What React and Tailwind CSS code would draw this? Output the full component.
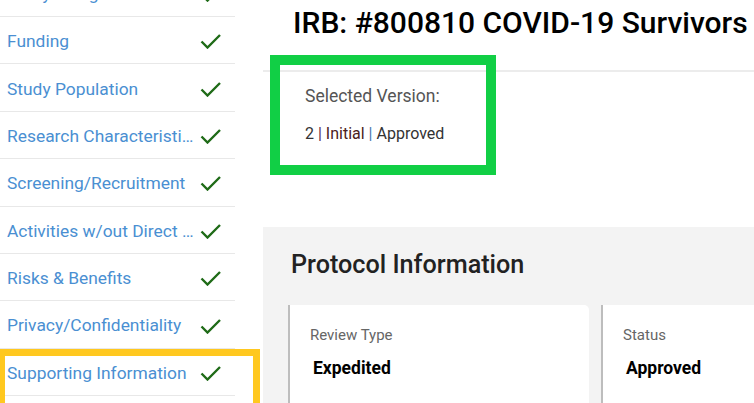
import React from 'react'

const steps = [
  'Study Design',
  'Funding',
  'Study Population',
  'Research Characteristics',
  'Screening/Recruitment',
  'Activities w/out Direct Contact',
  'Risks & Benefits',
  'Privacy/Confidentiality',
  'Supporting Information',
]

const Check = () => (
  <svg width="21" height="16" viewBox="0 0 21 16" fill="none" className="shrink-0">
    <path d="M1.5 8.5 L7.5 14.5 L20 2" stroke="#1f6b17" strokeWidth="2.4" />
  </svg>
)

const StepRow = ({ label }) => (
  <div className="h-[47.4px] flex items-center border-b border-[#e8e8e8] pl-[7px] pr-[14px] pt-[2px]">
    <span className="flex-1 min-w-0 truncate pr-[5px] text-[17.4px] text-[#4a8fd2]">{label}</span>
    <Check />
  </div>
)

const InfoCard = ({ label, value }) => (
  <div className="w-[301px] shrink-0 bg-white border-l-2 border-[#bdbdbd] rounded-tr-[5px] pt-[20px] pl-[20px] h-[120px]">
    <div className="text-[15px] leading-[20px] text-[#666]">{label}</div>
    <div className="mt-[11.4px] pl-[3px] text-[17.5px] leading-[24px] font-bold text-black">{value}</div>
  </div>
)

export default function App() {
  return (
    <div className="relative flex w-[754px] h-[403px] overflow-hidden bg-white font-['Roboto',sans-serif]">
      <aside className="w-[236px] shrink-0">
        <div className="mt-[-30.4px] w-[235px]">
          {steps.map((s) => (
            <StepRow key={s} label={s} />
          ))}
        </div>
      </aside>

      <main className="flex-1 min-w-0 pl-[27px]">
        <h1 className="pl-[30px] pt-[4.8px] text-[30px] leading-[36px] font-medium text-black whitespace-nowrap">
          IRB: #800810 COVID-19 Survivors
        </h1>
        <div className="mt-[29.2px] h-[2px] bg-[#ececec]" />

        <div className="pl-[42px] pt-[12px]">
          <div className="text-[17.5px] leading-[24px] text-[#555]">Selected Version:</div>
          <div className="mt-[16.5px] text-[16px] leading-[20px] text-[#333]">
            2 <span className="text-[#5a2a4a]">|</span> <span className="text-[#4a2020]">Initial</span>{' '}
            <span className="text-[#4a7ab0]">|</span> Approved
          </div>
        </div>

        <section className="mt-[82.5px] bg-[#f3f3f3] pt-[21.7px] pl-[25px] h-[200px]">
          <h2 className="pl-[3px] text-[25.2px] leading-[32px] font-medium text-[#222]">Protocol Information</h2>
          <div className="mt-[24.3px] flex gap-[12px]">
            <InfoCard label="Review Type" value="Expedited" />
            <InfoCard label="Status" value="Approved" />
          </div>
        </section>
      </main>

      <div className="absolute left-[270px] top-[55px] w-[226px] h-[120px] border-[10px] border-[#11cf45]" />
      <div className="absolute left-[-2px] top-[349px] w-[262px] h-[62px] border-[7px] border-[#ffc81f]" />
    </div>
  )
}
